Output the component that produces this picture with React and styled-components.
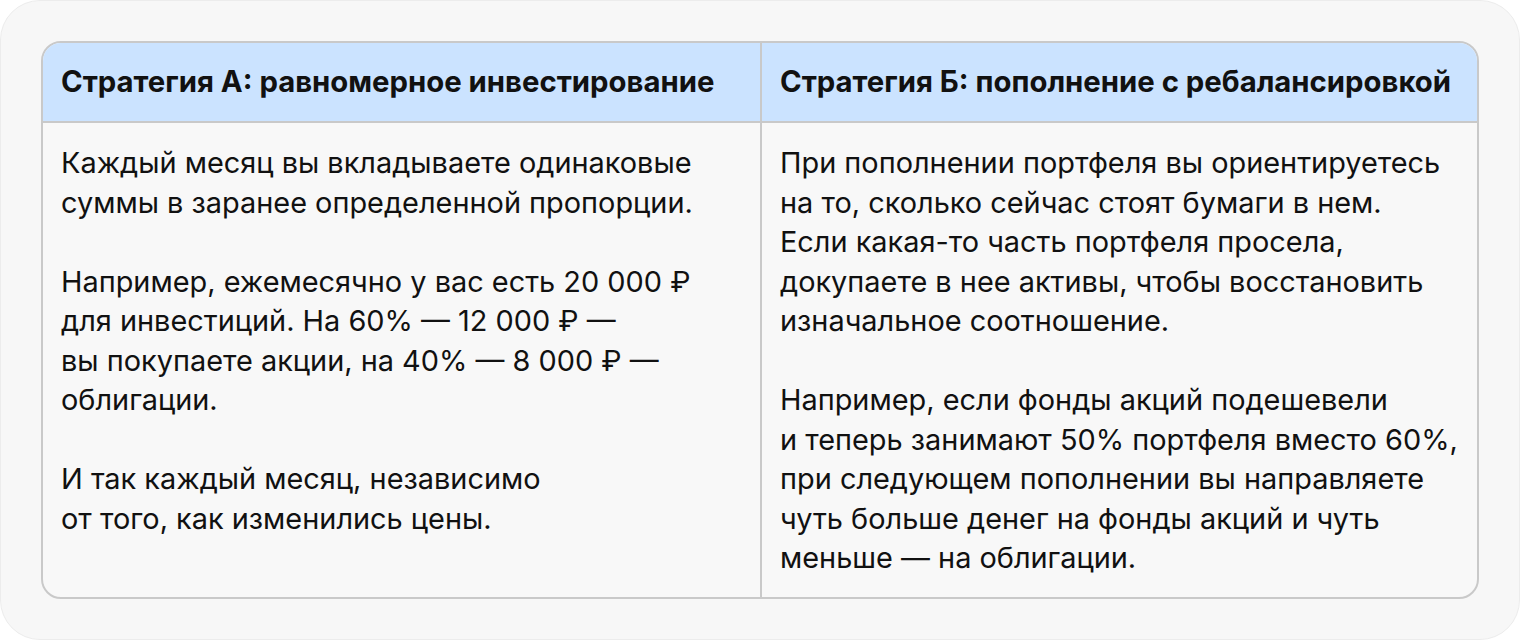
import React from 'react';
import styled, { createGlobalStyle } from 'styled-components';

const GlobalStyle = createGlobalStyle`
	html, body {
		margin: 0;
		padding: 0;
		background: #ffffff;
	}
	* {
		box-sizing: border-box;
	}
`;

const Frame = styled.div`
	width: 1520px;
	height: 640px;
	padding: 40px;
	background-color: #f7f7f7;
	border: 1px solid #ececec;
	border-radius: 40px;
	font-family: Inter, 'Noto Sans', sans-serif;
	color: #111111;
`;

const Table = styled.div`
	display: grid;
	grid-template-columns: 1fr 1fr;
	width: 100%;
	border: 2px solid #c9c9c9;
	border-radius: 20px;
	overflow: hidden;
	background-color: #f8f8f8;
`;

const HeadCell = styled.div`
	background-color: #cbe3ff;
	padding: 19px 18px;
	font-size: 29.3px;
	line-height: 40px;
	font-weight: 700;
	border-bottom: 2px solid #c9c9c9;
	border-left: ${({ first }) => (first ? 'none' : '2px solid #c9c9c9')};
	white-space: nowrap;
`;

const BodyCell = styled.div`
	padding: 20px 18px 19px;
	font-size: 28.9px;
	line-height: 39.5px;
	font-weight: 400;
	border-left: ${({ first }) => (first ? 'none' : '2px solid #c9c9c9')};
	white-space: nowrap;
`;

const Paragraph = styled.p`
	margin: 0;
	& + & {
		margin-top: 39.5px;
	}
`;

const columns = [
	{
		title: 'Стратегия А: равномерное инвестирование',
		paragraphs: [
			['Каждый месяц вы вкладываете одинаковые', 'суммы в заранее определенной пропорции.'],
			[
				'Например, ежемесячно у вас есть 20 000 ₽',
				'для инвестиций. На 60% — 12 000 ₽ —',
				'вы покупаете акции, на 40% — 8 000 ₽ —',
				'облигации.',
			],
			['И так каждый месяц, независимо', 'от того, как изменились цены.'],
		],
	},
	{
		title: 'Стратегия Б: пополнение с ребалансировкой',
		paragraphs: [
			[
				'При пополнении портфеля вы ориентируетесь',
				'на то, сколько сейчас стоят бумаги в нем.',
				'Если какая-то часть портфеля просела,',
				'докупаете в нее активы, чтобы восстановить',
				'изначальное соотношение.',
			],
			[
				'Например, если фонды акций подешевели',
				'и теперь занимают 50% портфеля вместо 60%,',
				'при следующем пополнении вы направляете',
				'чуть больше денег на фонды акций и чуть',
				'меньше — на облигации.',
			],
		],
	},
];

const Lines = ({ lines }) => (
	<Paragraph>
		{lines.map((line, i) => (
			<React.Fragment key={i}>
				{i > 0 && <br />}
				{line}
			</React.Fragment>
		))}
	</Paragraph>
);

export default function App() {
	return (
		<>
			<GlobalStyle />
			<Frame>
				<Table>
					{columns.map((col, i) => (
						<HeadCell key={col.title} first={i === 0}>
							{col.title}
						</HeadCell>
					))}
					{columns.map((col, i) => (
						<BodyCell key={col.title} first={i === 0}>
							{col.paragraphs.map((lines, j) => (
								<Lines key={j} lines={lines} />
							))}
						</BodyCell>
					))}
				</Table>
			</Frame>
		</>
	);
}
